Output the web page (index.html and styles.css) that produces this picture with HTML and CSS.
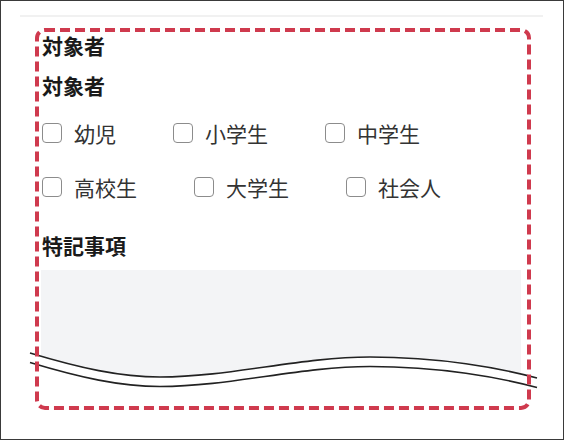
FILE: index.html
```html
<!DOCTYPE html>
<html lang="ja">
<head>
<meta charset="utf-8">
<link rel="stylesheet" href="styles.css">
</head>
<body>
<div class="frame">
  <div class="rule"></div>
  <section class="card">
    <h3 class="title">対象者</h3>
    <div class="field-label">対象者</div>
    <div class="options">
      <label class="option"><span class="box"></span><span class="opt-text">幼児</span></label>
      <label class="option"><span class="box"></span><span class="opt-text">小学生</span></label>
      <label class="option"><span class="box"></span><span class="opt-text">中学生</span></label>
      <label class="option"><span class="box"></span><span class="opt-text">高校生</span></label>
      <label class="option"><span class="box"></span><span class="opt-text">大学生</span></label>
      <label class="option"><span class="box"></span><span class="opt-text">社会人</span></label>
    </div>
    <div class="field-label notes-label">特記事項</div>
    <div class="notes"></div>
    <svg class="wave" width="510" height="60" viewBox="0 0 510 60">
      <path d="M0 3 C50 18, 90 27, 130 27 C200 27, 270 7, 340 7 C410 7, 470 18, 507 28 L507 60 L0 60 Z" fill="#ffffff"/>
      <path d="M0 3 C50 18, 90 27, 130 27 C200 27, 270 7, 340 7 C410 7, 470 18, 507 28" fill="none" stroke="#222" stroke-width="1.6"/>
      <path d="M0 12.5 C50 27.5, 90 36.5, 130 36.5 C200 36.5, 270 16.5, 340 16.5 C410 16.5, 470 27.5, 507 37.5" fill="none" stroke="#222" stroke-width="1.6"/>
    </svg>
    <svg class="dash" width="496" height="382" viewBox="0 0 496 382">
      <rect x="2" y="2" width="492" height="378" rx="8" ry="8" fill="none" stroke="#cf3a4e" stroke-width="4" stroke-dasharray="10 5"/>
    </svg>
  </section>
</div>
</body>
</html>
```

FILE: styles.css
```css
* { box-sizing: border-box; }
html, body { margin: 0; padding: 0; background: #fff; }
body {
  font-family: "Noto Sans CJK JP", "Noto Sans", sans-serif;
  color: #1a1a1a;
}
.frame {
  width: 564px;
  height: 440px;
  border: 1px solid #3a3a3a;
  padding-top: 14px;
  overflow: hidden;
}
.rule {
  margin-left: 19px;
  width: 523px;
  height: 2px;
  background: #f1f1f1;
}
.card {
  position: relative;
  margin: 11px 0 0 34px;
  width: 496px;
  height: 382px;
  padding: 3px 10px 0 7px;
}
.title {
  margin: 0 0 12px 0;
  font-size: 21px;
  line-height: 28px;
  font-weight: 700;
}
.field-label {
  font-size: 21px;
  line-height: 28px;
  font-weight: 700;
}
.options {
  display: flex;
  flex-wrap: wrap;
  column-gap: 57px;
  row-gap: 34px;
  margin-top: 24px;
}
.option {
  display: flex;
  align-items: center;
  gap: 12px;
  height: 20px;
}
.box {
  width: 20px;
  height: 20px;
  border: 1.5px solid #8c8c8c;
  border-radius: 4px;
  background: #fff;
}
.opt-text {
  font-size: 21px;
  line-height: 20px;
  color: #333;
}
.notes-label {
  margin-top: 34px;
}
.notes {
  margin-top: 11px;
  margin-left: -1px;
  height: 135px;
  background: #f3f4f6;
}
.wave {
  position: absolute;
  left: -5px;
  top: 322px;
  overflow: visible;
  z-index: 1;
}
.dash {
  position: absolute;
  left: 0;
  top: 0;
  z-index: 2;
  pointer-events: none;
}
```
